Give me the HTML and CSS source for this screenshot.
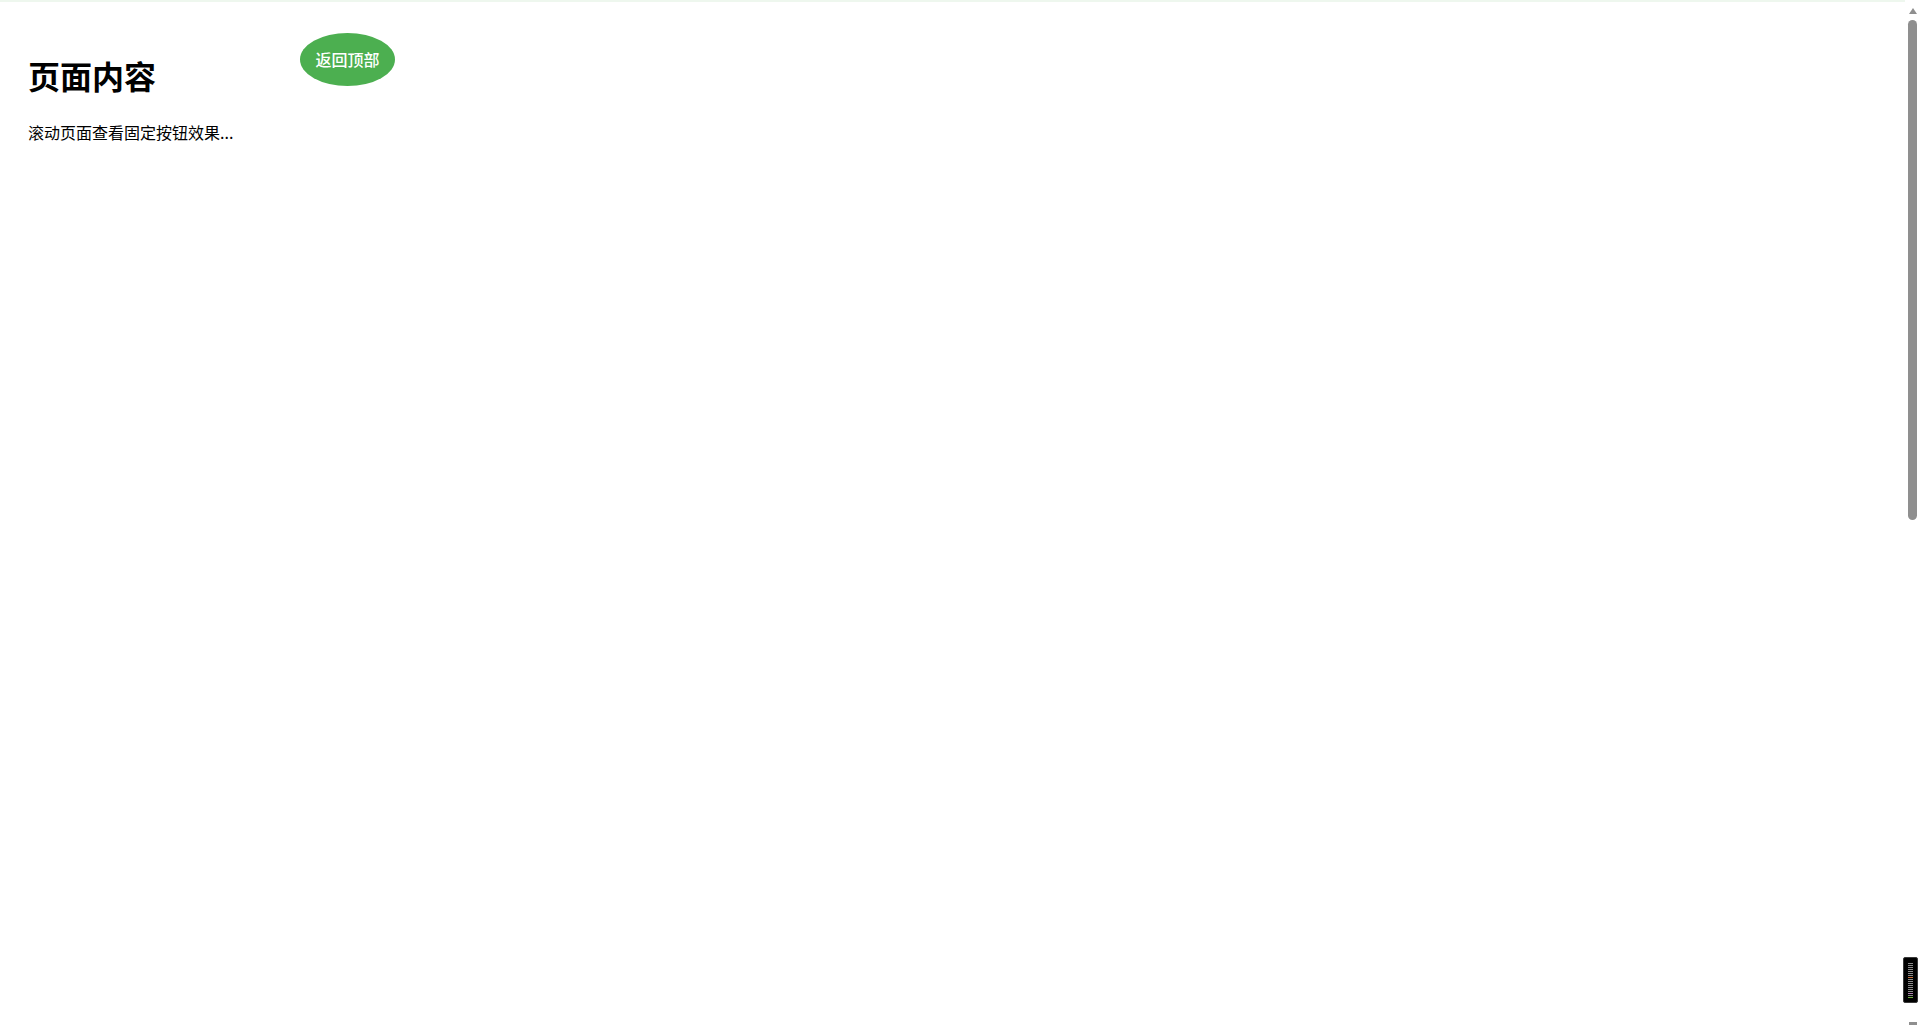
FILE: index.html
```html
<!DOCTYPE html>
<html lang="zh-CN">
<head>
<meta charset="utf-8">
<title>页面内容</title>
<link rel="stylesheet" href="styles.css">
</head>
<body>
<div class="top-line"></div>
<main class="content">
  <h1 class="title">页面内容</h1>
  <p class="text">滚动页面查看固定按钮效果...</p>
</main>
<button class="back-top" type="button">返回顶部</button>
<div class="scrollbar" aria-hidden="true">
  <span class="arrow-up"></span>
  <span class="thumb"></span>
  <span class="spacer"></span>
  <span class="arrow-down"></span>
</div>
<div class="meter" aria-hidden="true">
  <span class="tick"></span><span class="tick"></span><span class="tick"></span><span class="tick"></span><span class="tick"></span><span class="tick"></span><span class="tick"></span><span class="tick orange"></span><span class="tick"></span><span class="tick"></span><span class="tick"></span><span class="tick"></span><span class="tick"></span><span class="tick"></span><span class="tick"></span><span class="tick pink"></span><span class="tick"></span><span class="tick green"></span>
</div>
</body>
</html>
```
FILE: styles.css
```css
html, body {
  margin: 0;
  padding: 0;
  background: #ffffff;
}
body {
  font-family: "Noto Sans CJK SC", "Noto Sans", sans-serif;
  color: #000;
}
.top-line {
  height: 2px;
  background: #eef7ee;
}
.content {
  padding: 29px 28px 0 28px;
}
.title {
  font-size: 32px;
  font-weight: 700;
  margin: 21px 0 23px 0;
  line-height: 46px;
}
.text {
  font-size: 16px;
  margin: 16px 0;
  line-height: 23px;
}
.back-top {
  position: fixed;
  top: 33px;
  left: 300px;
  width: 95px;
  height: 53px;
  padding: 0 0 1px 0;
  border: none;
  border-radius: 50%;
  background: #4caf50;
  color: #fff;
  font-family: "Noto Sans CJK SC", "Noto Sans", sans-serif;
  font-size: 16px;
  font-weight: 500;
  cursor: pointer;
}
.scrollbar {
  position: fixed;
  top: 0;
  right: 0;
  bottom: 0;
  width: 15px;
  background: #ffffff;
  display: flex;
  flex-direction: column;
  align-items: center;
  padding: 8px 0 1px 0;
  box-sizing: border-box;
}
.arrow-up {
  width: 0;
  height: 0;
  border-left: 4px solid transparent;
  border-right: 4px solid transparent;
  border-bottom: 6px solid #8f8f8f;
}
.thumb {
  margin-top: 6px;
  width: 9px;
  height: 500px;
  border-radius: 5px;
  background: #8f8f8f;
}
.spacer {
  flex: 1;
}
.arrow-down {
  width: 8px;
  height: 3px;
  background: #8f8f8f;
}
.meter {
  position: fixed;
  right: 2px;
  top: 957px;
  width: 15px;
  height: 46px;
  box-sizing: border-box;
  background: #000;
  border: 1px solid #3a3a3a;
  border-radius: 2px;
  display: flex;
  flex-direction: column;
  align-items: center;
  justify-content: center;
  gap: 1px;
}
.tick {
  width: 5px;
  height: 1px;
  background: #8a8a8a;
}
.tick.orange { background: #c8703a; }
.tick.pink { background: #b080b0; }
.tick.green { background: #70b040; }
```
